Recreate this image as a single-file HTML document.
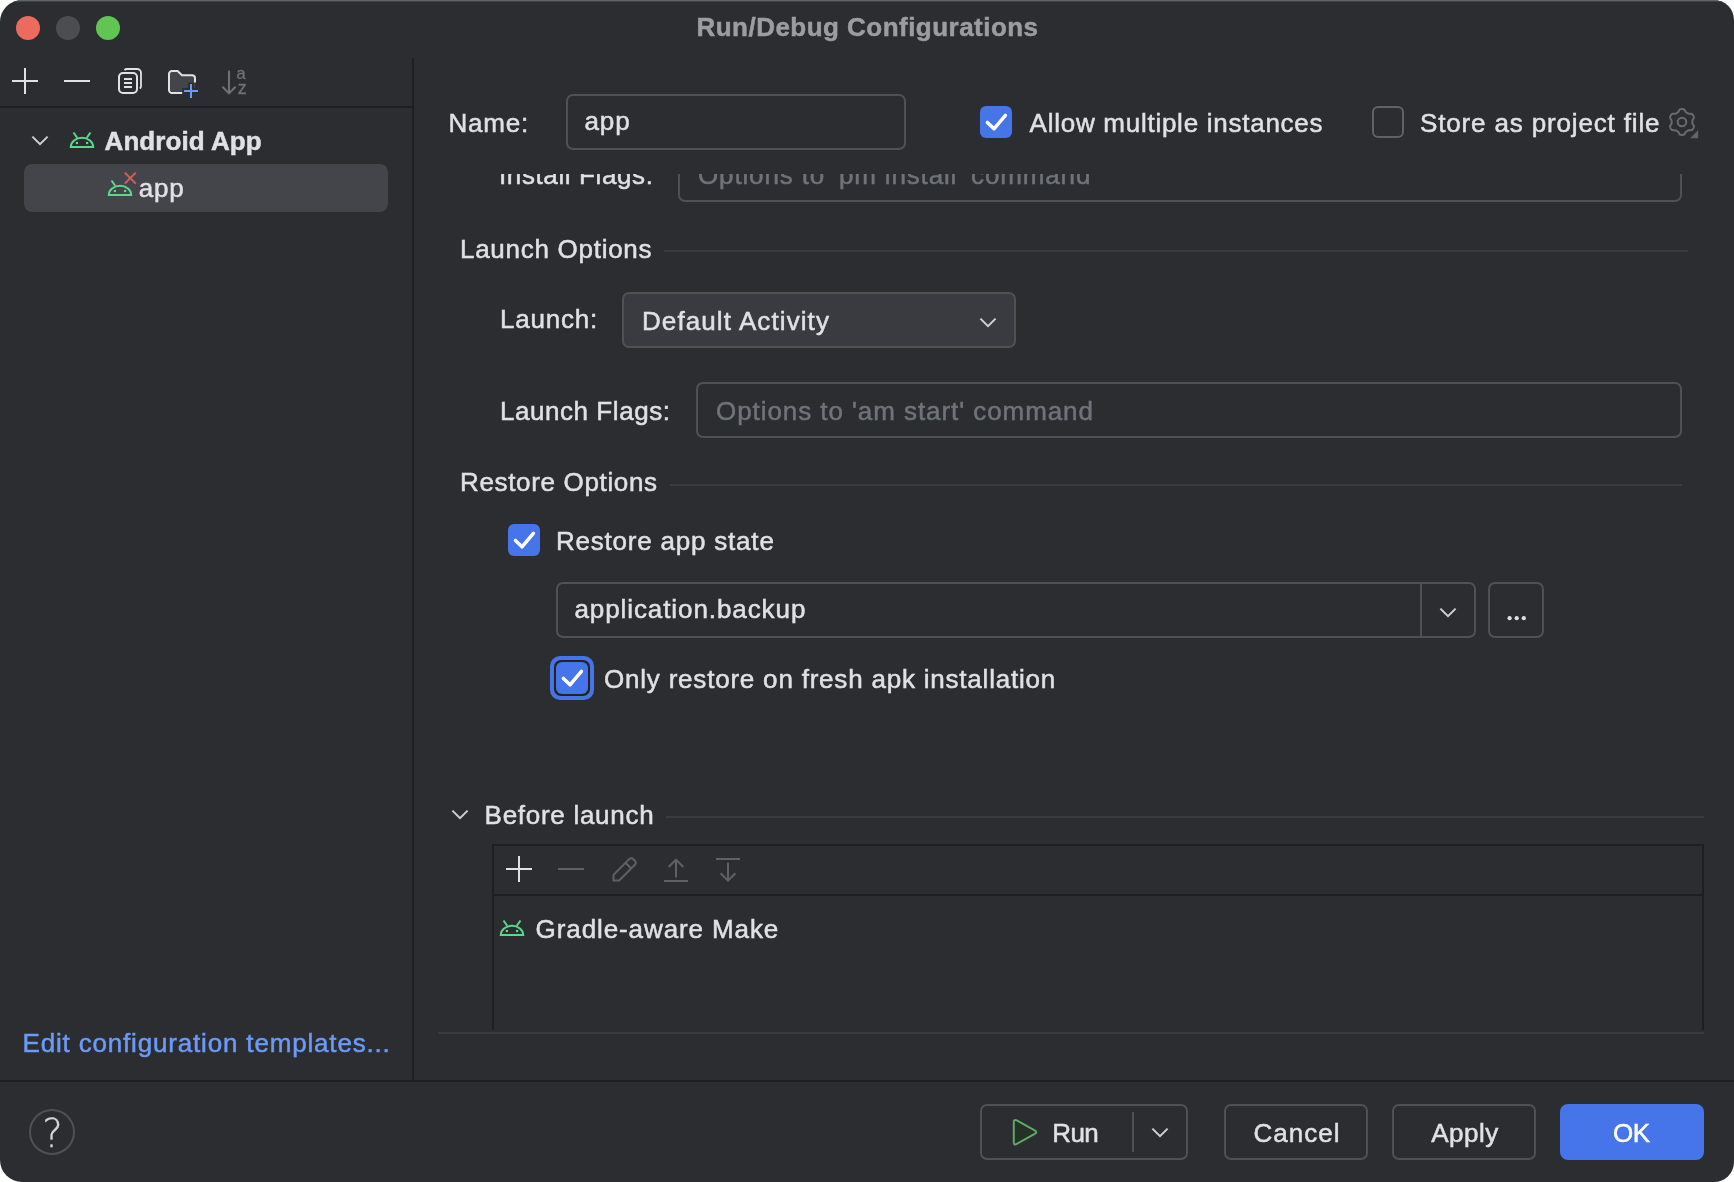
<!DOCTYPE html>
<html lang="en">
<head>
<meta charset="utf-8">
<title>Run/Debug Configurations</title>
<style>
html,body{margin:0;padding:0;background:#fff;}
body{width:1734px;height:1182px;position:relative;overflow:hidden;font-family:"Liberation Sans",sans-serif;}
#win{will-change:transform;position:absolute;left:0;top:0;width:1734px;height:1182px;background:#2b2d30;border-radius:22px 20px 20px 22px;overflow:hidden;}
#win:before{content:"";position:absolute;left:0;top:0;right:0;height:2px;background:linear-gradient(#626366 0,#626366 1px,#404245 1px,#404245 2px);}
.abs,.t,.ln,.box,svg{position:absolute;}
.t{white-space:pre;font-size:26px;line-height:26px;color:#dfe1e5;-webkit-text-stroke:0.5px currentColor;}
.ln{background:#1e1f22;}
.sep{background:#393b40;}
.box{box-sizing:border-box;border:2px solid #4f5157;border-radius:7px;}
.cb{position:absolute;width:32px;height:32px;border-radius:6px;background:#4674e9;box-sizing:border-box;}
.cb svg{left:0;top:0;}
.dot{position:absolute;width:24px;height:24px;border-radius:50%;top:16px;}
#scroll{position:absolute;left:414px;top:174px;width:1320px;height:618px;overflow:hidden;}
#scroll>div{position:absolute;left:-414px;top:-174px;width:1734px;height:1182px;}
</style>
</head>
<body>
<div id="win">
<!-- traffic lights -->
<div class="dot" style="left:16px;background:#ed6a5e;"></div>
<div class="dot" style="left:56px;background:#4c4d50;"></div>
<div class="dot" style="left:96px;background:#61c554;"></div>

<!-- structural lines -->
<div class="ln" style="left:0;top:106px;width:412px;height:2px;"></div>
<div class="ln" style="left:412px;top:58px;width:2px;height:1022px;"></div>
<div class="ln" style="left:0;top:1080px;width:1734px;height:2px;"></div>

<!-- left toolbar icons -->
<svg style="left:9px;top:65px" width="32" height="32" viewBox="0 0 16 16"><path d="M8 1.5v13M1.5 8h13" stroke="#dfe1e5" stroke-width="1" fill="none"/></svg>
<svg style="left:61px;top:65px" width="32" height="32" viewBox="0 0 16 16"><path d="M1.5 8h13" stroke="#dfe1e5" stroke-width="1" fill="none"/></svg>
<svg style="left:114px;top:65px" width="32" height="32" viewBox="0 0 16 16" fill="none" stroke="#dfe1e5" stroke-width="1"><rect x="2.500" y="4" width="9" height="10" rx="2"/><path d="M5.200 2.500A2 2 0 0 1 6.500 2h5a2 2 0 0 1 2 2v6.500a2 2 0 0 1-.5 1.300" stroke-width=".9"/><path d="M5 7h4M5 9h4M5 11h4"/></svg>
<svg style="left:166px;top:65px;overflow:visible" width="32" height="32" viewBox="0 0 16 16" fill="none"><path d="M8.200 14H3a1.500 1.500 0 0 1-1.500-1.500V4.500A1.500 1.500 0 0 1 3 3h2.800l2.200 2.100h5a1.500 1.500 0 0 1 1.500 1.500v7.400z" fill="#43454a" stroke="none"/><path d="M8.200 14H3a1.500 1.500 0 0 1-1.500-1.500V4.500A1.500 1.500 0 0 1 3 3h2.800l2.200 2.100h5a1.500 1.500 0 0 1 1.500 1.500v2.100" stroke="#dfe1e5" stroke-width="1"/><path d="M12.500 8.700v8.300M8.200 13h8.800" stroke="#2b2d30" stroke-width="3"/><path d="M12.500 9.500v7M9 13h7" stroke="#6a9bf8" stroke-width="1"/></svg>
<svg style="left:219px;top:65px" width="32" height="32" viewBox="0 0 16 16" fill="none" stroke="#6f7175" stroke-width="1"><path d="M5 2.700v11.400M1.700 10.900l3.300 3.300 3.300-3.300"/></svg>
<span class="t" style="left:236.600px;top:65.100px;font-size:16.500px;line-height:16.500px;color:#6f7175;-webkit-text-stroke:0.300px #6f7175;">a</span>
<span class="t" style="left:237.700px;top:79px;font-size:18px;line-height:18px;color:#6f7175;-webkit-text-stroke:0.300px #6f7175;">z</span>

<!-- tree -->
<svg style="left:24px;top:124px" width="32" height="32" viewBox="0 0 16 16" fill="none" stroke="#ced0d6" stroke-width="1"><path d="M4.200 6.300l3.800 3.800 3.800-3.800"/></svg>
<svg class="andr" style="left:66px;top:124px" width="32" height="32" viewBox="0 0 16 16" fill="none"><path d="M2.400 11.500a5.600 4.600 0 0 1 11.200 0z" stroke="#5fd68b" stroke-width="1"/><path d="M5.600 6.900L3.750 4.250M10.400 6.900l1.850-2.650" stroke="#5fd68b" stroke-width="1"/><rect x="4.900" y="8.950" width="1.100" height="1.100" fill="#5fd68b"/><rect x="10" y="8.950" width="1.100" height="1.100" fill="#5fd68b"/></svg>
<div class="abs" style="left:24px;top:164px;width:364px;height:48px;border-radius:8px;background:#43454a;"></div>
<svg class="andr" style="left:104px;top:172px;overflow:visible" width="32" height="32" viewBox="0 0 16 16" fill="none"><path d="M2.400 11.500a5.600 4.600 0 0 1 11.200 0z" stroke="#5fd68b" stroke-width="1"/><path d="M5.600 6.900L3.750 4.250" stroke="#5fd68b" stroke-width="1"/><rect x="4.900" y="8.950" width="1.100" height="1.100" fill="#5fd68b"/><rect x="10" y="8.950" width="1.100" height="1.100" fill="#5fd68b"/><path d="M10.400 0.300l5.500 5.500M15.900 0.300l-5.500 5.500" stroke="#db5c5c" stroke-width="1"/></svg>

<!-- name row -->
<div class="box" style="left:566px;top:94px;width:340px;height:56px;"></div>
<div class="cb" style="left:980px;top:106px;"><svg width="32" height="32" viewBox="0 0 16 16" fill="none"><path d="M3.700 8.200L7 11.400 12.700 4.700" stroke="#fff" stroke-width="1.750" stroke-linecap="round" stroke-linejoin="round"/></svg></div>
<div class="cb" style="left:1372px;top:106px;background:none;border:2px solid #606268;"></div>
<svg style="left:1666px;top:107px" width="36" height="36" viewBox="0 0 36 36" fill="none"><path d="M26.40 15.00 L26.40 14.45 L26.41 13.91 L26.49 13.34 L26.77 12.71 L27.30 11.97 L27.79 11.17 L27.93 10.42 L27.81 9.74 L27.57 9.10 L27.26 8.50 L26.89 7.93 L26.46 7.40 L25.93 6.96 L25.21 6.71 L24.27 6.73 L23.36 6.82 L22.68 6.74 L22.15 6.53 L21.67 6.27 L21.20 5.99 L20.73 5.72 L20.26 5.44 L19.81 5.08 L19.40 4.53 L19.03 3.70 L18.58 2.88 L18.00 2.38 L17.35 2.14 L16.68 2.03 L16.00 2.00 L15.32 2.03 L14.65 2.14 L14.00 2.38 L13.42 2.88 L12.97 3.70 L12.60 4.53 L12.19 5.08 L11.74 5.44 L11.27 5.72 L10.80 5.99 L10.33 6.27 L9.85 6.53 L9.32 6.74 L8.64 6.82 L7.73 6.73 L6.79 6.71 L6.07 6.96 L5.54 7.40 L5.11 7.93 L4.74 8.50 L4.43 9.10 L4.19 9.74 L4.07 10.42 L4.21 11.17 L4.70 11.97 L5.23 12.71 L5.51 13.34 L5.59 13.91 L5.60 14.45 L5.60 15.00 L5.60 15.55 L5.59 16.09 L5.51 16.66 L5.23 17.29 L4.70 18.03 L4.21 18.83 L4.07 19.58 L4.19 20.26 L4.43 20.90 L4.74 21.50 L5.11 22.07 L5.54 22.60 L6.07 23.04 L6.79 23.29 L7.73 23.27 L8.64 23.18 L9.32 23.26 L9.85 23.47 L10.33 23.73 L10.80 24.01 L11.27 24.28 L11.74 24.56 L12.19 24.92 L12.60 25.47 L12.97 26.30 L13.42 27.12 L14.00 27.62 L14.65 27.86 L15.32 27.97 L16.00 28.00 L16.68 27.97 L17.35 27.86 L18.00 27.62 L18.58 27.12 L19.03 26.30 L19.40 25.47 L19.81 24.92 L20.26 24.56 L20.73 24.28 L21.20 24.01 L21.67 23.73 L22.15 23.47 L22.68 23.26 L23.36 23.18 L24.27 23.27 L25.21 23.29 L25.93 23.04 L26.46 22.60 L26.89 22.07 L27.26 21.50 L27.57 20.90 L27.81 20.26 L27.93 19.58 L27.79 18.83 L27.30 18.03 L26.77 17.29 L26.49 16.66 L26.41 16.09 L26.40 15.55Z" stroke="#6a6b6f" stroke-width="2" stroke-linejoin="round"/><circle cx="16" cy="15" r="4.300" stroke="#6a6b6f" stroke-width="2"/><path d="M32.200 23v8.200h-8.200z" fill="#626366"/></svg>

<!-- scroll area -->
<div id="scroll"><div>
<div class="box" style="left:678px;top:146px;width:1004px;height:56px;"></div>
<div class="ln sep" style="left:664px;top:250px;width:1024px;height:2px;"></div>
<div class="box" style="left:622px;top:292px;width:394px;height:56px;background:#393b40;"></div>
<svg style="left:972px;top:306px" width="32" height="32" viewBox="0 0 16 16" fill="none" stroke="#ced0d6" stroke-width="1"><path d="M4.200 6.300l3.800 3.800 3.800-3.800"/></svg>
<div class="box" style="left:696px;top:382px;width:986px;height:56px;"></div>
<div class="ln sep" style="left:670px;top:484px;width:1012px;height:2px;"></div>
<div class="cb" style="left:508px;top:524px;"><svg width="32" height="32" viewBox="0 0 16 16" fill="none"><path d="M3.700 8.200L7 11.400 12.700 4.700" stroke="#fff" stroke-width="1.750" stroke-linecap="round" stroke-linejoin="round"/></svg></div>
<div class="box" style="left:556px;top:582px;width:920px;height:56px;"></div>
<div class="ln" style="left:1420px;top:584px;width:2px;height:52px;background:#4e5157;"></div>
<svg style="left:1432px;top:596px" width="32" height="32" viewBox="0 0 16 16" fill="none" stroke="#ced0d6" stroke-width="1"><path d="M4.200 6.300l3.800 3.800 3.800-3.800"/></svg>
<div class="box" style="left:1488px;top:582px;width:56px;height:56px;"></div>
<svg style="left:1500px;top:602px" width="32" height="32" viewBox="0 0 16 16" fill="#dfe1e5"><circle cx="4.800" cy="8.100" r="1.050"/><circle cx="8.350" cy="8.100" r="1.050"/><circle cx="11.900" cy="8.100" r="1.050"/></svg>
<div class="abs" style="left:550px;top:656px;width:44px;height:44px;border-radius:10px;background:#4674e9;"></div>
<div class="abs" style="left:554px;top:660px;width:36px;height:36px;border-radius:7px;background:#252320;"></div>
<div class="cb" style="left:556px;top:662px;"><svg width="32" height="32" viewBox="0 0 16 16" fill="none"><path d="M3.700 8.200L7 11.400 12.700 4.700" stroke="#fff" stroke-width="1.750" stroke-linecap="round" stroke-linejoin="round"/></svg></div>
<span class="t" style="left:499.00px;top:162.00px;letter-spacing:0.615px;color:#dfe1e5;">Install Flags:</span>
<span class="t" style="left:698.00px;top:162.00px;letter-spacing:0.850px;color:#6f737a;">Options to &#x27;pm install&#x27; command</span>
<span class="t" style="left:460.00px;top:236.00px;letter-spacing:0.723px;color:#dfe1e5;">Launch Options</span>
<span class="t" style="left:500.00px;top:306.00px;letter-spacing:0.800px;color:#dfe1e5;">Launch:</span>
<span class="t" style="left:642.00px;top:308.00px;letter-spacing:1.093px;color:#dfe1e5;">Default Activity</span>
<span class="t" style="left:500.00px;top:398.00px;letter-spacing:0.550px;color:#dfe1e5;">Launch Flags:</span>
<span class="t" style="left:716.00px;top:398.00px;letter-spacing:0.929px;color:#6f737a;">Options to &#x27;am start&#x27; command</span>
<span class="t" style="left:460.00px;top:469.40px;letter-spacing:0.657px;color:#dfe1e5;">Restore Options</span>
<span class="t" style="left:556.00px;top:528.00px;letter-spacing:0.788px;color:#dfe1e5;">Restore app state</span>
<span class="t" style="left:574.40px;top:596.00px;letter-spacing:0.918px;color:#dfe1e5;">application.backup</span>
<span class="t" style="left:604.00px;top:666.00px;letter-spacing:0.792px;color:#dfe1e5;">Only restore on fresh apk installation</span>
</div></div>

<!-- before launch -->
<svg style="left:444px;top:798px" width="32" height="32" viewBox="0 0 16 16" fill="none" stroke="#ced0d6" stroke-width="1"><path d="M4.200 6.300l3.800 3.800 3.800-3.800"/></svg>
<div class="ln sep" style="left:666px;top:816px;width:1038px;height:2px;"></div>
<div class="ln" style="left:492px;top:844px;width:1212px;height:2px;"></div>
<div class="ln" style="left:492px;top:894px;width:1212px;height:2px;"></div>
<div class="ln" style="left:492px;top:844px;width:2px;height:186px;"></div>
<div class="ln" style="left:1702px;top:844px;width:2px;height:186px;"></div>
<div class="ln sep" style="left:438px;top:1032px;width:1266px;height:2px;"></div>
<svg style="left:503px;top:853px" width="32" height="32" viewBox="0 0 16 16"><path d="M8 1.500v13M1.500 8h13" stroke="#dfe1e5" stroke-width="1" fill="none"/></svg>
<svg style="left:555px;top:853px" width="32" height="32" viewBox="0 0 16 16"><path d="M1.500 8h13" stroke="#606164" stroke-width="1" fill="none"/></svg>
<svg style="left:608px;top:853px" width="32" height="32" viewBox="0 0 16 16" fill="none" stroke="#606164" stroke-width="1"><path d="M2.750 13.750V10.900L10.600 3.050a1.400 1.400 0 0 1 2 0l.850.850a1.400 1.400 0 0 1 0 2L5.600 13.750zM8.750 4.900l2.850 2.850"/></svg>
<svg style="left:660px;top:853px" width="32" height="32" viewBox="0 0 16 16" fill="none" stroke="#606164" stroke-width="1"><path d="M8 12.200V3.600M4.300 7L8 3.300l3.700 3.700M2 14h12"/></svg>
<svg style="left:712px;top:853px" width="32" height="32" viewBox="0 0 16 16" fill="none" stroke="#606164" stroke-width="1"><path d="M2 3h12M8 4.800v8.700M4.300 10.100L8 13.800l3.700-3.700"/></svg>
<svg class="andr" style="left:496px;top:912px" width="32" height="32" viewBox="0 0 16 16" fill="none"><path d="M2.400 11.500a5.600 4.600 0 0 1 11.200 0z" stroke="#5fd68b" stroke-width="1"/><path d="M5.600 6.900L3.750 4.250M10.400 6.900l1.850-2.650" stroke="#5fd68b" stroke-width="1"/><rect x="4.900" y="8.950" width="1.100" height="1.100" fill="#5fd68b"/><rect x="10" y="8.950" width="1.100" height="1.100" fill="#5fd68b"/></svg>

<!-- footer -->
<div class="abs" style="left:29px;top:1109px;width:46px;height:46px;box-sizing:border-box;border:2px solid #4e5157;border-radius:50%;"></div>
<span class="t q" style="left:32.500px;top:1111px;width:40px;text-align:center;font-family:'DejaVu Sans Light','DejaVu Sans','Liberation Sans',sans-serif;font-weight:200;font-size:38.500px;line-height:46px;color:#d4d6da;-webkit-text-stroke:0.300px #d4d6da;">?</span>
<div class="box" style="left:980px;top:1104px;width:208px;height:56px;"></div>
<div class="ln" style="left:1132px;top:1112px;width:2px;height:40px;background:#4e5157;"></div>
<svg style="left:1008px;top:1116px" width="32" height="32" viewBox="0 0 16 16"><path d="M2.90 3.10Q2.90 1.40 4.39 2.23L13.34 7.23Q14.90 8.10 13.34 8.97L4.39 13.97Q2.90 14.80 2.90 13.10Z" fill="#253027" stroke="#5fa866" stroke-width="1"/></svg>
<svg style="left:1144px;top:1116px" width="32" height="32" viewBox="0 0 16 16" fill="none" stroke="#ced0d6" stroke-width="1"><path d="M4.200 6.300l3.800 3.800 3.800-3.800"/></svg>
<div class="box" style="left:1224px;top:1104px;width:144px;height:56px;"></div>
<div class="box" style="left:1392px;top:1104px;width:144px;height:56px;"></div>
<div class="abs" style="left:1560px;top:1104px;width:144px;height:56px;border-radius:8px;background:#4674e9;"></div>
<span class="t" style="left:696.50px;top:14.00px;letter-spacing:0.470px;color:#9c9da0;font-weight:700;">Run/Debug Configurations</span>
<span class="t" style="left:104.60px;top:128.00px;letter-spacing:0.060px;color:#dfe1e5;font-weight:700;">Android App</span>
<span class="t" style="left:138.80px;top:175.00px;letter-spacing:0.800px;color:#dfe1e5;">app</span>
<span class="t" style="left:448.40px;top:110.00px;letter-spacing:0.800px;color:#dfe1e5;">Name:</span>
<span class="t" style="left:584.50px;top:108.00px;letter-spacing:0.900px;color:#dfe1e5;">app</span>
<span class="t" style="left:1029.60px;top:110.00px;letter-spacing:0.735px;color:#dfe1e5;">Allow multiple instances</span>
<span class="t" style="left:1420.00px;top:110.00px;letter-spacing:0.850px;color:#dfe1e5;">Store as project file</span>
<span class="t" style="left:484.60px;top:802.00px;letter-spacing:0.717px;color:#dfe1e5;">Before launch</span>
<span class="t" style="left:535.60px;top:916.00px;letter-spacing:0.900px;color:#dfe1e5;">Gradle-aware Make</span>
<span class="t" style="left:22.50px;top:1030.00px;letter-spacing:0.827px;color:#6c9af8;">Edit configuration templates...</span>
<span class="t" style="left:1052.30px;top:1120.00px;letter-spacing:-0.600px;color:#dfe1e5;">Run</span>
<span class="t" style="left:1253.50px;top:1120.00px;letter-spacing:1.020px;color:#dfe1e5;">Cancel</span>
<span class="t" style="left:1431.20px;top:1120.00px;letter-spacing:0.500px;color:#dfe1e5;">Apply</span>
<span class="t" style="left:1613.10px;top:1120.00px;letter-spacing:-0.600px;color:#ffffff;">OK</span>
</div>
</body>
</html>
